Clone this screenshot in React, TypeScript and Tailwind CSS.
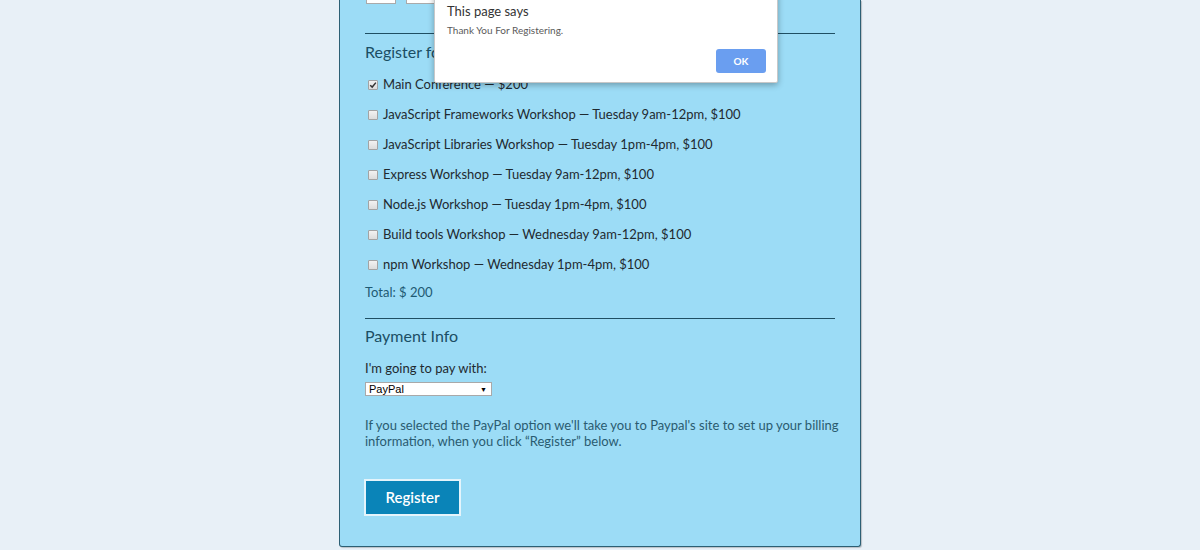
import React from "react";

const workshops = [
  { label: "Main Conference — $200", checked: true },
  { label: "JavaScript Frameworks Workshop — Tuesday 9am-12pm, $100", checked: false },
  { label: "JavaScript Libraries Workshop — Tuesday 1pm-4pm, $100", checked: false },
  { label: "Express Workshop — Tuesday 9am-12pm, $100", checked: false },
  { label: "Node.js Workshop — Tuesday 1pm-4pm, $100", checked: false },
  { label: "Build tools Workshop — Wednesday 9am-12pm, $100", checked: false },
  { label: "npm Workshop — Wednesday 1pm-4pm, $100", checked: false },
];

function Box({ checked }: { checked: boolean }) {
  return (
    <span className="inline-flex w-[10px] h-[10px] items-center justify-center border border-[#a3a3a3] bg-gradient-to-b from-[#f2f2f2] to-[#dcdcdc] rounded-[1px]">
      {checked && (
        <svg viewBox="0 0 10 10" className="w-[8px] h-[8px]">
          <path d="M1.5 5.2 L4 7.6 L8.6 2" fill="none" stroke="#333" strokeWidth="1.8" />
        </svg>
      )}
    </span>
  );
}

export default function App() {
  return (
    <div className="relative w-[1200px] h-[550px] overflow-hidden bg-[#e8f0f7] font-['Lato',sans-serif]">
      <div className="flow-root ml-[339px] w-[522px] h-[547px] bg-[#9cdcf6] border-x border-b border-[#2c5f74] rounded-b-[3px] shadow-[1px_1px_1px_rgba(0,0,0,0.2)] px-[25px]">
        {/* cut off inputs on top */}
        <div className="flex gap-[10px] -mt-[10px] ml-[1px]">
          <div className="w-[30px] h-[14px] bg-white border border-[#aaa]" />
          <div className="w-[60px] h-[14px] bg-white border border-[#aaa]" />
        </div>

        <div className="mt-[29px] border-t border-[#1f4f63]" />
        <h2 className="mt-[8px] text-[16px] leading-[20px] text-[#1b4e64]">Register for Activities</h2>

        <div className="mt-[13px] flex flex-col gap-[10px]">
          {workshops.map(w => (
            <label key={w.label} className="flex items-center h-[20px] text-[13px] text-[#1f2a30]">
              <span className="ml-[3px] mr-[5px] flex"><Box checked={w.checked} /></span>
              {w.label}
            </label>
          ))}
        </div>

        <p className="mt-[7px] text-[13px] leading-[20px] text-[#1e5a73]">Total: $ 200</p>

        <div className="mt-[16px] border-t border-[#1f4f63]" />
        <h2 className="mt-[7px] text-[16px] leading-[20px] text-[#1b4e64]">Payment Info</h2>

        <p className="mt-[13px] text-[13px] leading-[18px] text-[#1f2a30]">I'm going to pay with:</p>
        <div className="mt-[5px] w-[127px] h-[14px] bg-white border border-[#a9a9a9] flex items-center justify-between pl-[3px] pr-[4px] font-['Liberation_Sans',sans-serif] text-[11px] text-black leading-none">
          <span>PayPal</span>
          <span className="text-[7px]">▼</span>
        </div>

        <p className="mt-[21px] text-[13px] leading-[16px] text-[#2a5b70] w-[480px]">
          If you selected the PayPal option we'll take you to Paypal's site to set up your billing information, when you click “Register” below.
        </p>

        <button className="mt-[30px] -ml-[1px] w-[97px] h-[37px] bg-[#0a84b8] border-2 border-[#e4f4fb] text-white text-[15px] font-semibold">
          Register
        </button>
      </div>

      {/* alert dialog */}
      <div className="absolute left-[434px] -top-[10px] w-[344px] h-[93px] bg-white border border-[#c8c8c8] shadow-[0_2px_6px_rgba(0,0,0,0.3)] rounded-b-[2px]">
        <p className="absolute left-[12px] top-[12px] text-[13px] leading-[16px] text-[#333]">This page says</p>
        <p className="absolute left-[12px] top-[33px] text-[10px] leading-[12px] text-[#5a5a5a]">Thank You For Registering.</p>
        <button className="absolute left-[281px] top-[58px] w-[50px] h-[24px] rounded-[3px] bg-[#6a9ef0] text-white text-[10px] font-bold">
          OK
        </button>
      </div>
    </div>
  );
}
